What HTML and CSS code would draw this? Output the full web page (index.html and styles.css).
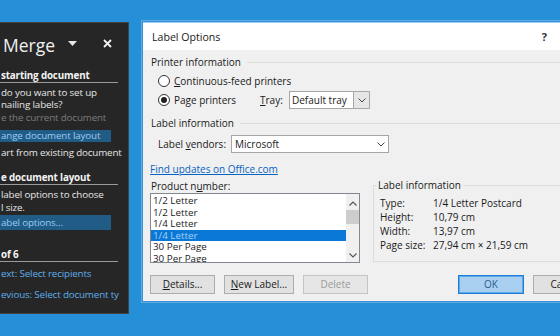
FILE: index.html
```html
<!DOCTYPE html>
<html>
<head>
<meta charset="utf-8">
<link rel="stylesheet" href="styles.css">
</head>
<body>
<div class="pane">
  <div class="pane-head">
    <span class="pane-title">Merge</span>
    <svg class="caret" width="9" height="5" viewBox="0 0 9 5"><path d="M0 0H9L4.5 5Z" fill="#e8e8e8"/></svg>
    <svg class="close" width="9" height="9" viewBox="0 0 9 9"><path d="M1 1L8 8M8 1L1 8" stroke="#f2f2f2" stroke-width="1.8"/></svg>
  </div>
  <div class="pane-h h1">starting document</div>
  <div class="pane-p p1">do you want to set up<br>nailing labels?</div>
  <div class="pane-dis">e the current document</div>
  <div class="pane-sel s1">ange document layout</div>
  <div class="pane-opt">art from existing document</div>
  <div class="pane-h h2">e document layout</div>
  <div class="pane-p p2">label options to choose<br>l size.</div>
  <div class="pane-sel s2">abel options...</div>
  <div class="pane-h h3">of 6</div>
  <div class="pane-link l1">ext: Select recipients</div>
  <div class="pane-link l2">evious: Select document ty</div>
</div>

<div class="dlg">
  <div class="dlg-title">
    <span>Label Options</span>
    <span class="help">?</span>
  </div>
  <div class="dlg-body">
    <div class="grp-title g1"><span>Printer information</span></div>
    <div class="radio-row r1"><span class="radio"></span><span><u>C</u>ontinuous-feed printers</span></div>
    <div class="radio-row r2">
      <span class="radio on"></span>
      <span class="pp">Pa<u>g</u>e printers</span>
      <span class="tray"><u>T</u>ray:</span>
      <div class="select tray-sel"><span class="sel-text">Default tray</span><span class="drop"><svg width="8" height="5" viewBox="0 0 8 5"><path d="M0.5 0.5L4 4L7.5 0.5" fill="none" stroke="#444" stroke-width="1"/></svg></span></div>
    </div>
    <div class="grp-title g2"><span>Label information</span></div>
    <div class="vendor-row">
      <span class="vend-label">Label <u>v</u>endors:</span>
      <div class="select vend-sel"><span class="sel-text">Microsoft</span><span class="drop"><svg width="8" height="5" viewBox="0 0 8 5"><path d="M0.5 0.5L4 4L7.5 0.5" fill="none" stroke="#444" stroke-width="1"/></svg></span></div>
    </div>
    <div class="link-row"><span class="link">Find updates on Office.com</span></div>
    <div class="cols">
      <div class="left-col">
        <div class="pn-label">Product n<u>u</u>mber:</div>
        <div class="listbox">
          <div class="items">
            <div class="item">1/2 Letter</div>
            <div class="item">1/2 Letter</div>
            <div class="item">1/4 Letter</div>
            <div class="item selected">1/4 Letter</div>
            <div class="item">30 Per Page</div>
            <div class="item">30 Per Page</div>
          </div>
          <div class="sbar">
            <svg class="sb-up" width="8" height="5" viewBox="0 0 8 5"><path d="M0.5 4.5L4 1L7.5 4.5" fill="none" stroke="#555" stroke-width="1.2"/></svg>
            <div class="thumb"></div>
            <div class="sb-fill"></div>
            <svg class="sb-down" width="8" height="5" viewBox="0 0 8 5"><path d="M0.5 0.5L4 4L7.5 0.5" fill="none" stroke="#555" stroke-width="1.2"/></svg>
          </div>
        </div>
      </div>
      <div class="info-grp">
        <div class="info-title">Label information</div>
        <div class="info-row"><span class="k">Type:</span><span>1/4 Letter Postcard</span></div>
        <div class="info-row"><span class="k">Height:</span><span>10,79 cm</span></div>
        <div class="info-row"><span class="k">Width:</span><span>13,97 cm</span></div>
        <div class="info-row"><span class="k">Page size:</span><span>27,94 cm × 21,59 cm</span></div>
      </div>
    </div>
    <div class="btn-row">
      <div class="btn w65"><u>D</u>etails...</div>
      <div class="btn w70"><u>N</u>ew Label...</div>
      <div class="btn w65 disabled">Delete</div>
      <div class="btn w66 ok">OK</div>
      <div class="btn w66">Cancel</div>
    </div>
  </div>
</div>
</body>
</html>
```

FILE: styles.css
```css
html, body {
  margin: 0;
  padding: 0;
}
body {
  width: 560px;
  height: 336px;
  overflow: hidden;
  background: #2590d8;
  display: flex;
  align-items: flex-start;
  font-family: "Open Sans", "Noto Sans", sans-serif;
}

/* ---------- left task pane ---------- */
.pane {
  margin-top: 22px;
  width: 128px;
  height: 290px;
  background: #262626;
  border: 1px solid #444;
  border-left: none;
  flex-shrink: 0;
  color: #e6e6e6;
  font-size: 9.8px;
  letter-spacing: -0.15px;
  white-space: nowrap;
  overflow: hidden;
}
.pane-head {
  display: flex;
  align-items: center;
  height: 26px;
  margin-top: 9px;
  padding-left: 3px;
  letter-spacing: 0;
}
.pane-title {
  font-size: 17.5px;
  color: #f0f0f0;
  line-height: 26px;
  width: 65px;
}
.caret {
  margin-top: -4px;
}
.close {
  margin-left: 26px;
  margin-top: -4px;
}
.pane-h {
  font-weight: 700;
  color: #f4f4f4;
  width: 117px;
  line-height: 13px;
  border-bottom: 1px solid #9a9a9a;
  padding-left: 1px;
}
.h1 { margin-top: 11px; }
.h2 { margin-top: 12px; }
.h3 { margin-top: 18px; }
.pane-p {
  padding-left: 1px;
  line-height: 12px;
}
.p1 { margin-top: 4px; }
.p2 { margin-top: 3px; line-height: 13px; }
.pane-dis {
  margin-top: 1px;
  line-height: 12px;
  color: #7c7c7c;
  padding-left: 1px;
}
.pane-sel {
  width: 110px;
  background: #215c87;
  color: #9bcdf3;
  padding-left: 1px;
}
.s1 { margin-top: 6px; height: 12px; line-height: 12px; }
.s2 { margin-top: 1px; height: 15px; line-height: 15px; }
.pane-opt {
  margin-top: 5px;
  line-height: 12px;
  padding-left: 1px;
}
.pane-link {
  color: #5eaeea;
  line-height: 12px;
  padding-left: 1px;
}
.l1 { margin-top: 6px; }
.l2 { margin-top: 9px; }

/* ---------- dialog ---------- */
.dlg {
  margin-left: 13px;
  margin-top: 21px;
  width: 470px;
  flex-shrink: 0;
  border: 1px solid #3b90da;
  background: #f0f0f0;
  color: #1a1a1a;
  font-size: 10px;
  box-shadow: 0 0 0 1px rgba(255, 255, 255, 0.25);
}
.dlg-title {
  height: 27px;
  background: #fff;
  border-top: 1px solid #9fcdf2;
  display: flex;
  align-items: center;
  justify-content: space-between;
  padding-left: 9px;
  padding-right: 66px;
  font-size: 10.6px;
}
.help {
  font-weight: 700;
  font-size: 11px;
  color: #333;
}
.dlg-body {
  padding: 0 0 7px 7px;
}
.grp-title {
  display: flex;
  align-items: center;
  line-height: 12px;
  padding-left: 1px;
}
.grp-title::after {
  content: "";
  flex: 1;
  height: 1px;
  background: #dcdcdc;
  margin-left: 6px;
}
.g1 { margin-top: 6px; }
.g2 { margin-top: 8px; }

.radio-row {
  display: flex;
  align-items: center;
  padding-left: 8px;
}
.r1 { margin-top: 6px; height: 14px; }
.r2 { margin-top: 3px; height: 18px; }
.radio {
  width: 10px;
  height: 10px;
  border: 1px solid #333;
  border-radius: 50%;
  background: #fff;
  margin-right: 4px;
  display: flex;
  align-items: center;
  justify-content: center;
  flex-shrink: 0;
}
.radio.on::after {
  content: "";
  width: 6px;
  height: 6px;
  border-radius: 50%;
  background: #222;
}
.pp { width: 86px; }
.tray { width: 29px; }

.select {
  display: flex;
  align-items: stretch;
  height: 16px;
  border: 1px solid #a6a6a6;
  background: #fff;
}
.sel-text {
  flex: 1;
  padding-left: 2px;
  line-height: 16px;
}
.drop {
  width: 15px;
  background: #e6e6e6;
  border-left: 1px solid #a6a6a6;
  display: flex;
  align-items: center;
  justify-content: center;
}
.tray-sel { width: 79px; }

.vendor-row {
  margin-top: 6px;
  display: flex;
  align-items: center;
  padding-left: 8px;
}
.vend-label { width: 73px; }
.vend-sel { width: 156px; }
.vend-sel .sel-text { padding-left: 3px; }
.vend-sel .drop { background: #fff; border-left: none; }

.link-row {
  margin-top: 10px;
  line-height: 12px;
}
.link {
  color: #0563c1;
  text-decoration: underline;
}

.cols {
  display: flex;
  align-items: flex-start;
  margin-top: 5px;
}
.left-col {
  width: 210px;
  margin-right: 13px;
  flex-shrink: 0;
}
.pn-label {
  line-height: 12px;
  padding-left: 1px;
}
.listbox {
  margin-top: 1px;
  height: 68px;
  border: 1px solid #828790;
  background: #fff;
  display: flex;
  overflow: hidden;
}
.items {
  flex: 1;
  padding-top: 1px;
}
.item {
  height: 11.5px;
  line-height: 11.5px;
  padding-left: 2px;
  font-size: 9.8px;
}
.item.selected {
  background: #0a78d7;
  color: #a8d0f2;
}
.sbar {
  width: 13px;
  background: #f0f0f0;
  display: flex;
  flex-direction: column;
  align-items: center;
}
.sb-up { margin-top: 7px; }
.thumb {
  margin-top: 4px;
  width: 13px;
  height: 14px;
  background: #cdcdcd;
}
.sb-fill { flex: 1; }
.sb-down { margin-bottom: 4px; }

.info-grp {
  flex: 1;
  margin-top: 5px;
  border: 1px solid #dcdcdc;
  padding: 0 0 9px 6px;
  height: 66px;
}
.info-title {
  display: block;
  width: max-content;
  margin-top: -7px;
  margin-left: -4px;
  padding: 0 2px;
  background: #f0f0f0;
  line-height: 12px;
}
.info-row {
  display: flex;
  line-height: 14px;
}
.info-title + .info-row { margin-top: 5px; }
.k { width: 53px; }

.btn-row {
  display: flex;
  margin-top: 12px;
}
.btn {
  height: 17px;
  line-height: 17px;
  border: 1px solid #adadad;
  background: #e1e1e1;
  text-align: center;
  margin-right: 9px;
  flex-shrink: 0;
}
.w65 { width: 63px; }
.w70 { width: 68px; }
.w66 { width: 64px; }
.btn.disabled {
  color: #9a9a9a;
  border-color: #c4c4c4;
  background: #e6e6e6;
}
.btn.ok {
  margin-left: 81px;
  background: #a9d0f1;
  border-color: #1c7ed6;
  box-shadow: inset 0 0 0 1px #5fa8e8;
  color: #2c5d8a;
}
```
